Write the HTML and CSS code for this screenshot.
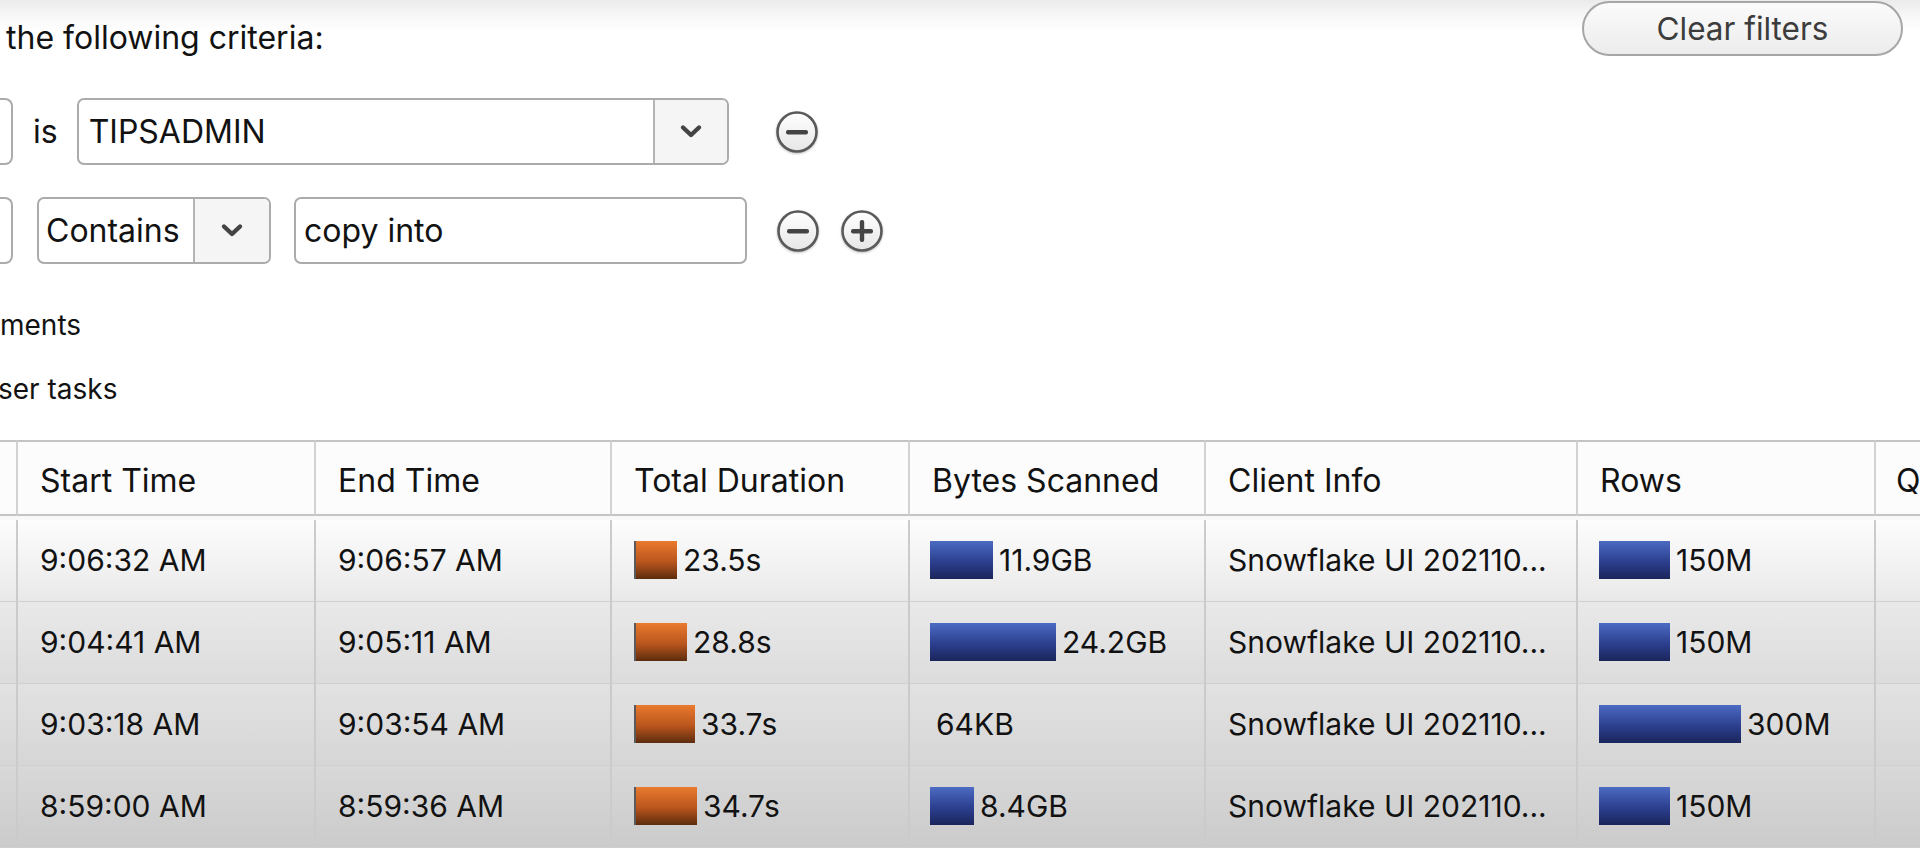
FILE: index.html
```html
<!DOCTYPE html>
<html lang="en">
<head>
<meta charset="utf-8">
<title>History filters</title>
<link rel="stylesheet" href="styles.css">
</head>
<body>
<div class="page">
  <section class="filters">
    <div class="filters-head">
      <div class="criteria">the following criteria:</div>
      <button class="clear-btn">Clear filters</button>
    </div>

    <div class="crit-row row-a">
      <div class="stub"></div>
      <span class="op-label">is</span>
      <div class="select sel-user">
        <span class="sel-value">TIPSADMIN</span>
        <span class="sel-arrow"><svg width="24" height="15" viewBox="0 0 24 15"><polyline points="4,3.5 12,11 20,3.5" fill="none" stroke="#444" stroke-width="4.4" stroke-linecap="round" stroke-linejoin="round"/></svg></span>
      </div>
      <span class="round-btn btn-first"><svg width="44" height="44" viewBox="0 0 44 44"><defs><linearGradient id="g1" x1="0" y1="0" x2="0" y2="1"><stop offset="0" stop-color="#ffffff"/><stop offset="1" stop-color="#e6e6e6"/></linearGradient></defs><circle cx="22" cy="22" r="19.5" fill="url(#g1)" stroke="#5a5a5a" stroke-width="2.6"/><rect x="11" y="20" width="22" height="4.4" rx="2" fill="#444"/></svg></span>
    </div>

    <div class="crit-row row-b">
      <div class="stub"></div>
      <div class="select sel-op">
        <span class="sel-value">Contains</span>
        <span class="sel-arrow"><svg width="24" height="15" viewBox="0 0 24 15"><polyline points="4,3.5 12,11 20,3.5" fill="none" stroke="#444" stroke-width="4.4" stroke-linecap="round" stroke-linejoin="round"/></svg></span>
      </div>
      <div class="text-input">copy into</div>
      <span class="round-btn btn-second"><svg width="44" height="44" viewBox="0 0 44 44"><defs><linearGradient id="g2" x1="0" y1="0" x2="0" y2="1"><stop offset="0" stop-color="#ffffff"/><stop offset="1" stop-color="#e6e6e6"/></linearGradient></defs><circle cx="22" cy="22" r="19.5" fill="url(#g2)" stroke="#5a5a5a" stroke-width="2.6"/><rect x="11" y="20" width="22" height="4.4" rx="2" fill="#444"/></svg></span>
      <span class="round-btn btn-plus"><svg width="44" height="44" viewBox="0 0 44 44"><defs><linearGradient id="g3" x1="0" y1="0" x2="0" y2="1"><stop offset="0" stop-color="#ffffff"/><stop offset="1" stop-color="#e6e6e6"/></linearGradient></defs><circle cx="22" cy="22" r="19.5" fill="url(#g3)" stroke="#5a5a5a" stroke-width="2.6"/><rect x="11" y="20" width="22" height="4.4" rx="2" fill="#444"/><rect x="19.8" y="11" width="4.4" height="22" rx="2" fill="#444"/></svg></span>
    </div>

    <div class="opt opt-first">ments</div>
    <div class="opt opt-second">ser tasks</div>
  </section>

  <table class="grid">
    <thead>
      <tr>
        <th class="c0"></th>
        <th class="c-start">Start Time</th>
        <th class="c-end">End Time</th>
        <th class="c-dur">Total Duration</th>
        <th class="c-bytes">Bytes Scanned</th>
        <th class="c-client">Client Info</th>
        <th class="c-rows">Rows</th>
        <th class="c-q">Q</th>
        <th class="c-rest"></th>
      </tr>
    </thead>
    <tbody>
      <tr class="spacer"><td colspan="9"></td></tr>
      <tr class="r1">
        <td></td>
        <td>9:06:32 AM</td>
        <td>9:06:57 AM</td>
        <td><div class="barcell"><span class="bar bar-dur" style="width:43px"></span>23.5s</div></td>
        <td class="bytes"><div class="barcell"><span class="bar bar-blue" style="width:63px"></span>11.9GB</div></td>
        <td>Snowflake UI 202110...</td>
        <td class="rowsc"><div class="barcell"><span class="bar bar-blue" style="width:71px"></span>150M</div></td>
        <td class="qcell"></td>
        <td></td>
      </tr>
      <tr class="r2">
        <td></td>
        <td>9:04:41 AM</td>
        <td>9:05:11 AM</td>
        <td><div class="barcell"><span class="bar bar-dur" style="width:53px"></span>28.8s</div></td>
        <td class="bytes"><div class="barcell"><span class="bar bar-blue" style="width:126px"></span>24.2GB</div></td>
        <td>Snowflake UI 202110...</td>
        <td class="rowsc"><div class="barcell"><span class="bar bar-blue" style="width:71px"></span>150M</div></td>
        <td class="qcell"></td>
        <td></td>
      </tr>
      <tr class="r3">
        <td></td>
        <td>9:03:18 AM</td>
        <td>9:03:54 AM</td>
        <td><div class="barcell"><span class="bar bar-dur" style="width:61px"></span>33.7s</div></td>
        <td class="bytes"><div class="barcell"><span class="bar bar-blue" style="width:0px"></span>64KB</div></td>
        <td>Snowflake UI 202110...</td>
        <td class="rowsc"><div class="barcell"><span class="bar bar-blue" style="width:142px"></span>300M</div></td>
        <td class="qcell"></td>
        <td></td>
      </tr>
      <tr class="r4">
        <td></td>
        <td>8:59:00 AM</td>
        <td>8:59:36 AM</td>
        <td><div class="barcell"><span class="bar bar-dur" style="width:63px"></span>34.7s</div></td>
        <td class="bytes"><div class="barcell"><span class="bar bar-blue" style="width:44px"></span>8.4GB</div></td>
        <td>Snowflake UI 202110...</td>
        <td class="rowsc"><div class="barcell"><span class="bar bar-blue" style="width:71px"></span>150M</div></td>
        <td class="qcell"></td>
        <td></td>
      </tr>
    </tbody>
  </table>
</div>
</body>
</html>
```

FILE: styles.css
```css
* { box-sizing: border-box; }

html, body {
  margin: 0;
  padding: 0;
  height: 100%;
  overflow: hidden;
}

body {
  background: linear-gradient(#ebebeb 0px, #f6f6f6 14px, #ffffff 32px) no-repeat;
  background-color: #ffffff;
  font-family: Inter, "Liberation Sans", sans-serif;
  color: #121212;
}

.page {
  width: 1920px;
}

/* ---------- filter panel ---------- */
.filters {
  padding: 1px 17px 0 0;
}

.filters-head {
  display: flex;
  justify-content: space-between;
  align-items: flex-start;
}

.criteria {
  font-size: 32px;
  line-height: 38px;
  margin-top: 18px;
  padding-left: 6px;
}

.clear-btn {
  width: 321px;
  height: 55px;
  border: 2px solid #a6a6a6;
  border-radius: 28px;
  background: linear-gradient(#fbfbfb, #ececec);
  font-family: Inter, "Liberation Sans", sans-serif;
  font-size: 31.5px;
  color: #3c3c3c;
  padding: 0;
}

.crit-row {
  display: flex;
  align-items: center;
  height: 67px;
}

.row-a { margin-top: 41px; }
.row-b { margin-top: 32px; }

.stub {
  width: 13px;
  height: 67px;
  border: 2px solid #ababab;
  border-left: none;
  border-radius: 0 8px 8px 0;
  background: #fff;
}

.op-label {
  font-size: 32px;
  margin-left: 20px;
}

.select {
  display: flex;
  align-items: stretch;
  height: 67px;
  border: 2px solid #ababab;
  border-radius: 7px;
  background: #fff;
  overflow: hidden;
}

.sel-value {
  flex: 1;
  display: flex;
  align-items: center;
  font-size: 32px;
}

.sel-arrow {
  display: flex;
  align-items: center;
  justify-content: center;
  border-left: 2px solid #b4b4b4;
  background: #f5f5f5;
}

.sel-user {
  width: 652px;
  margin-left: 19px;
}
.sel-user .sel-value { padding-left: 10px; }
.sel-user .sel-arrow { width: 74px; }

.sel-op {
  width: 234px;
  margin-left: 24px;
}
.sel-op .sel-value { padding-left: 7px; }
.sel-op .sel-arrow { width: 76px; }

.text-input {
  width: 453px;
  height: 67px;
  margin-left: 23px;
  border: 2px solid #ababab;
  border-radius: 7px;
  background: #fff;
  display: flex;
  align-items: center;
  padding-left: 8px;
  font-size: 32px;
}

.round-btn {
  display: flex;
  width: 44px;
  height: 44px;
  filter: drop-shadow(0 1px 1px rgba(0,0,0,0.25));
}

.btn-first { margin-left: 46px; }
.btn-second { margin-left: 29px; }
.btn-plus { margin-left: 20px; }

.opt {
  font-size: 28px;
  line-height: 64px;
  white-space: nowrap;
}

.opt-first { margin-top: 29px; }
.opt-second { text-indent: -2px; }

/* ---------- table ---------- */
.grid {
  margin-top: 19px;
  border-collapse: separate;
  border-spacing: 0;
  table-layout: fixed;
  width: 2200px;
  font-size: 30px;
}

.grid th {
  height: 76px;
  padding: 4px 0 0 22px;
  text-align: left;
  font-weight: 400;
  font-size: 32px;
  background: #fcfcfc;
  border-top: 2px solid #c4c4c4;
  border-bottom: 2px solid #c4c4c4;
  border-right: 2px solid #d2d2d2;
  white-space: nowrap;
  overflow: hidden;
}

.grid th.c0 { width: 18px; padding: 0; }
.grid th.c-start { width: 298px; }
.grid th.c-end { width: 296px; }
.grid th.c-dur { width: 298px; }
.grid th.c-bytes { width: 296px; }
.grid th.c-client { width: 372px; }
.grid th.c-rows { width: 298px; }
.grid th.c-q { width: 300px; padding-left: 20px; }
.grid th.c-rest { width: 24px; }

.grid tr.spacer td {
  height: 4px;
  padding: 0;
  border: none;
  background: #f8f8f8;
}

.grid td {
  height: 82px;
  padding: 0 0 2px 22px;
  border-right: 2px solid #cbcbcb;
  border-bottom: 1px solid #cfcfcf;
  white-space: nowrap;
  overflow: hidden;
  vertical-align: middle;
}

.grid td:first-child { padding: 0; }
.grid td.bytes { padding-left: 20px; }
.grid td.rowsc { padding-left: 21px; }
.grid td.qcell { box-shadow: inset -262px 0 0 -260px #e0e0e0; }

.grid tr.r1 td { background: linear-gradient(#fdfdfd, #e9e9e9); }
.grid tr.r2 td { background: linear-gradient(#e9e9e9, #dcdcdc); }
.grid tr.r3 td { background: linear-gradient(#e2e2e2, #d6d6d6); }
.grid tr.r4 td { background: linear-gradient(#d8d8d8, #cbcbcb); }

.barcell {
  display: flex;
  align-items: center;
}

.bar {
  display: inline-block;
  height: 38px;
  margin-right: 6px;
  flex: none;
}

.bar-dur {
  background: linear-gradient(#ea7a2e, #b9551d 55%, #5c2c0d);
  box-shadow: inset 2px 0 0 #5a5a5a;
}

.bar-blue {
  background: linear-gradient(#4b6bc2, #2c3f8e 55%, #1a255b);
}
```
